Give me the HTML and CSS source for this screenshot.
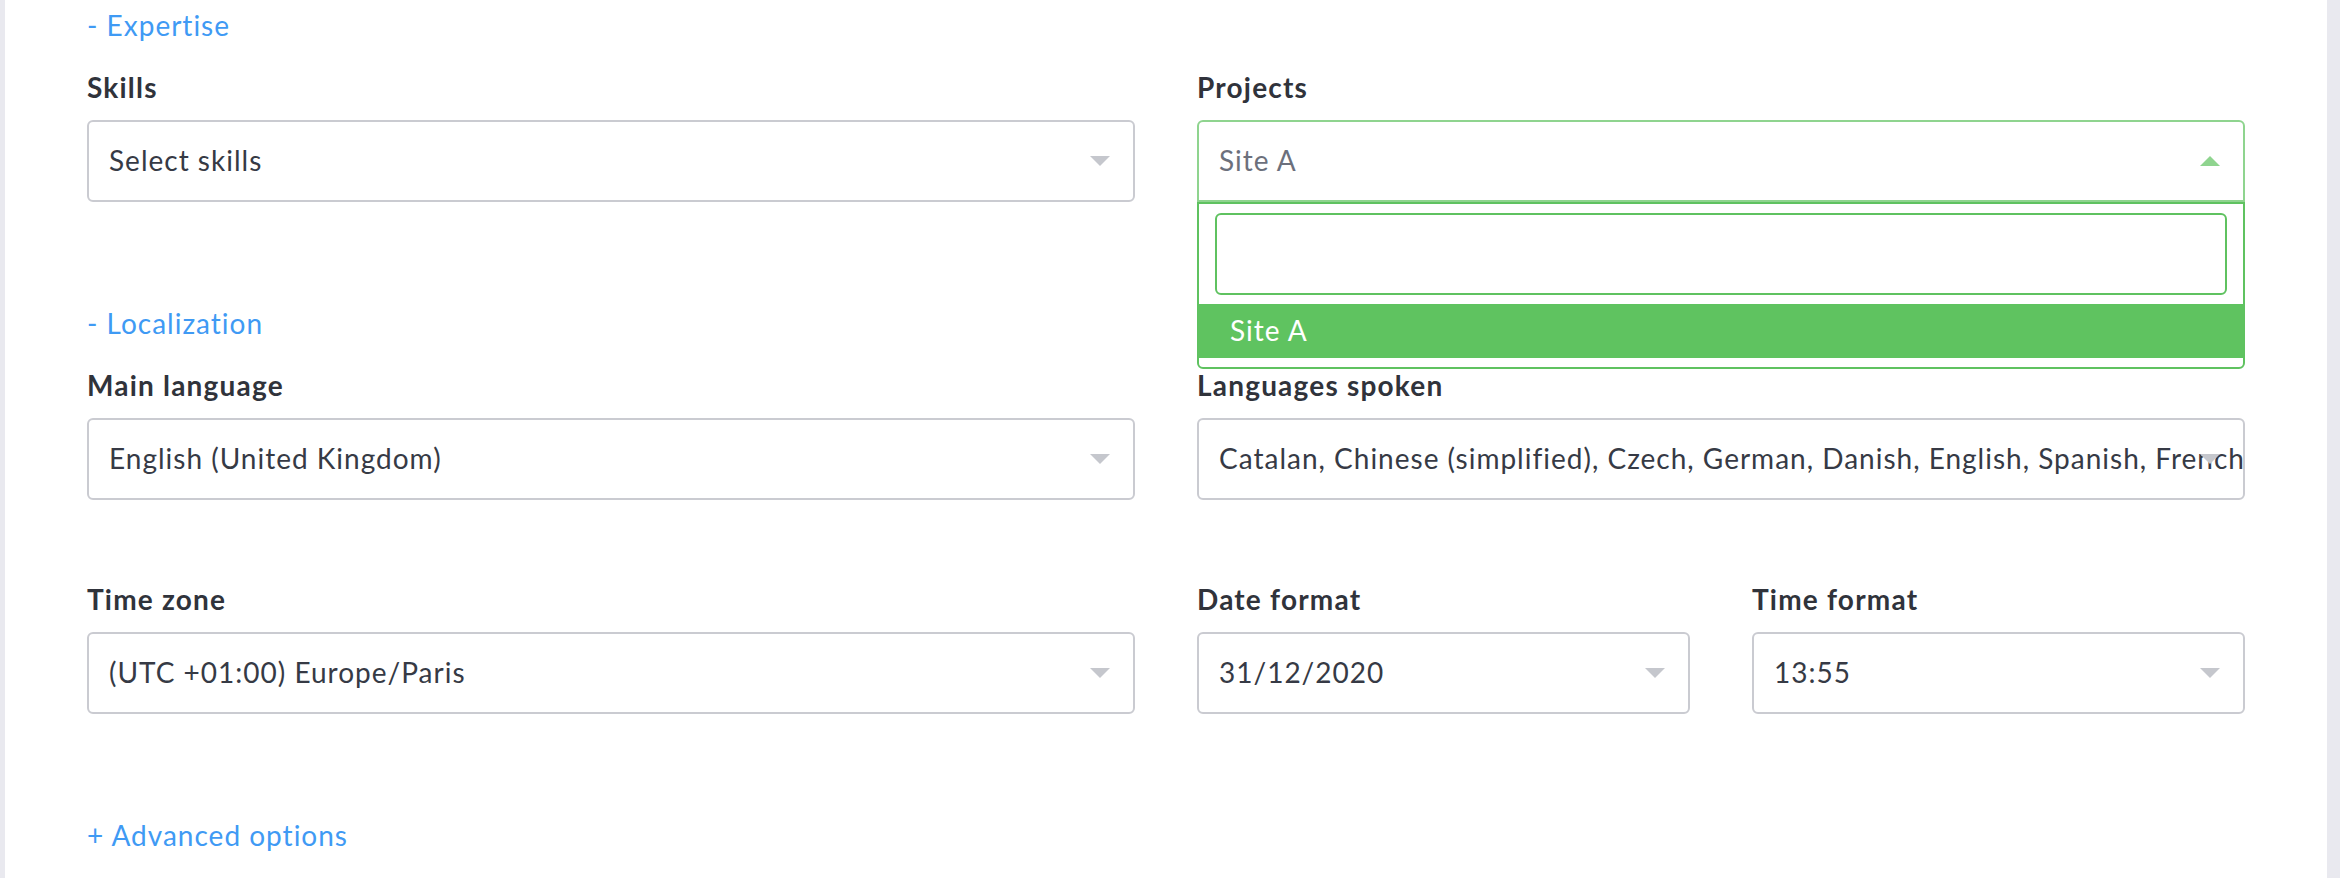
FILE: index.html
```html
<!DOCTYPE html>
<html lang="en">
<head>
<meta charset="utf-8">
<title>Settings</title>
<link rel="stylesheet" href="styles.css">
</head>
<body>
<main class="panel">
  <section class="section">
    <a class="toggle" href="#">- Expertise</a>
    <div class="row two">
      <div class="field">
        <div class="label">Skills</div>
        <div class="select"><span class="value">Select skills</span><i class="caret"></i></div>
      </div>
      <div class="field">
        <div class="label">Projects</div>
        <div class="select-wrap">
          <div class="select focused"><span class="value muted">Site A</span><i class="caret up"></i></div>
          <div class="dropdown">
            <div class="search"></div>
            <div class="option active">Site A</div>
          </div>
        </div>
      </div>
    </div>
  </section>

  <section class="section">
    <a class="toggle" href="#">- Localization</a>
    <div class="row two">
      <div class="field">
        <div class="label">Main language</div>
        <div class="select"><span class="value">English (United Kingdom)</span><i class="caret"></i></div>
      </div>
      <div class="field">
        <div class="label">Languages spoken</div>
        <div class="select"><span class="value">Catalan, Chinese (simplified), Czech, German, Danish, English, Spanish, French</span><i class="caret"></i></div>
      </div>
    </div>
    <div class="row two">
      <div class="field">
        <div class="label">Time zone</div>
        <div class="select"><span class="value">(UTC +01:00) Europe/Paris</span><i class="caret"></i></div>
      </div>
      <div class="row two inner">
        <div class="field">
          <div class="label">Date format</div>
          <div class="select"><span class="value">31/12/2020</span><i class="caret"></i></div>
        </div>
        <div class="field">
          <div class="label">Time format</div>
          <div class="select"><span class="value">13:55</span><i class="caret"></i></div>
        </div>
      </div>
    </div>
  </section>

  <a class="toggle" href="#">+ Advanced options</a>
</main>
</body>
</html>
```

FILE: styles.css
```css
* { box-sizing: border-box; }

html, body {
  margin: 0;
  padding: 0;
  height: 100%;
  overflow: hidden;
}

body {
  background: #e9e9ef;
  font-family: "Lato", "Open Sans", sans-serif;
  font-size: 28px;
  line-height: 40px;
  letter-spacing: 1px;
  color: #363a45;
}

.panel {
  background: #ffffff;
  margin: 0 13px 0 5px;
  height: 100%;
  padding: 5px 82px 0 82px;
  display: flex;
  flex-direction: column;
  align-items: stretch;
}

.section {
  display: flex;
  flex-direction: column;
  margin-bottom: 22px;
}

.toggle {
  display: block;
  align-self: flex-start;
  color: #3f9af4;
  text-decoration: none;
  height: 40px;
}

.section > .toggle {
  margin-bottom: 22px;
}

.row {
  display: grid;
  grid-template-columns: 1fr 1fr;
  column-gap: 62px;
  margin-bottom: 79px;
}

.row.inner {
  margin-bottom: 0;
}

.field {
  display: flex;
  flex-direction: column;
  min-width: 0;
}

.label {
  font-weight: 700;
  letter-spacing: 1.2px;
  color: #30333b;
  height: 40px;
  margin-bottom: 13px;
}

.select-wrap {
  position: relative;
}

.select {
  position: relative;
  height: 82px;
  border: 2px solid #cacbd1;
  border-radius: 6px;
  padding: 0 20px 2px;
  display: flex;
  align-items: center;
  overflow: hidden;
  background: #fff;
}

.value {
  white-space: nowrap;
}

.muted {
  color: #6c707c;
}

.caret {
  position: absolute;
  right: 23px;
  top: 34px;
  width: 0;
  height: 0;
  border-left: 10px solid transparent;
  border-right: 10px solid transparent;
  border-top: 10px solid #c5c7cd;
}

.caret.up {
  border-top: 0;
  border-bottom: 10px solid #8fd48f;
}

.select.focused {
  border-color: #8fd48f;
  border-radius: 6px 6px 0 0;
}

.dropdown {
  position: absolute;
  left: 0;
  right: 0;
  top: 82px;
  z-index: 5;
  background: #fff;
  border: 2px solid #5fc260;
  border-radius: 0 0 6px 6px;
  padding: 9px 0;
}

.search {
  height: 82px;
  margin: 0 16px 9px;
  border: 2px solid #5fc260;
  border-radius: 6px;
}

.option {
  height: 54px;
  padding: 6px 31px 8px;
}

.option.active {
  background: #5fc360;
  color: #ffffff;
}
```
